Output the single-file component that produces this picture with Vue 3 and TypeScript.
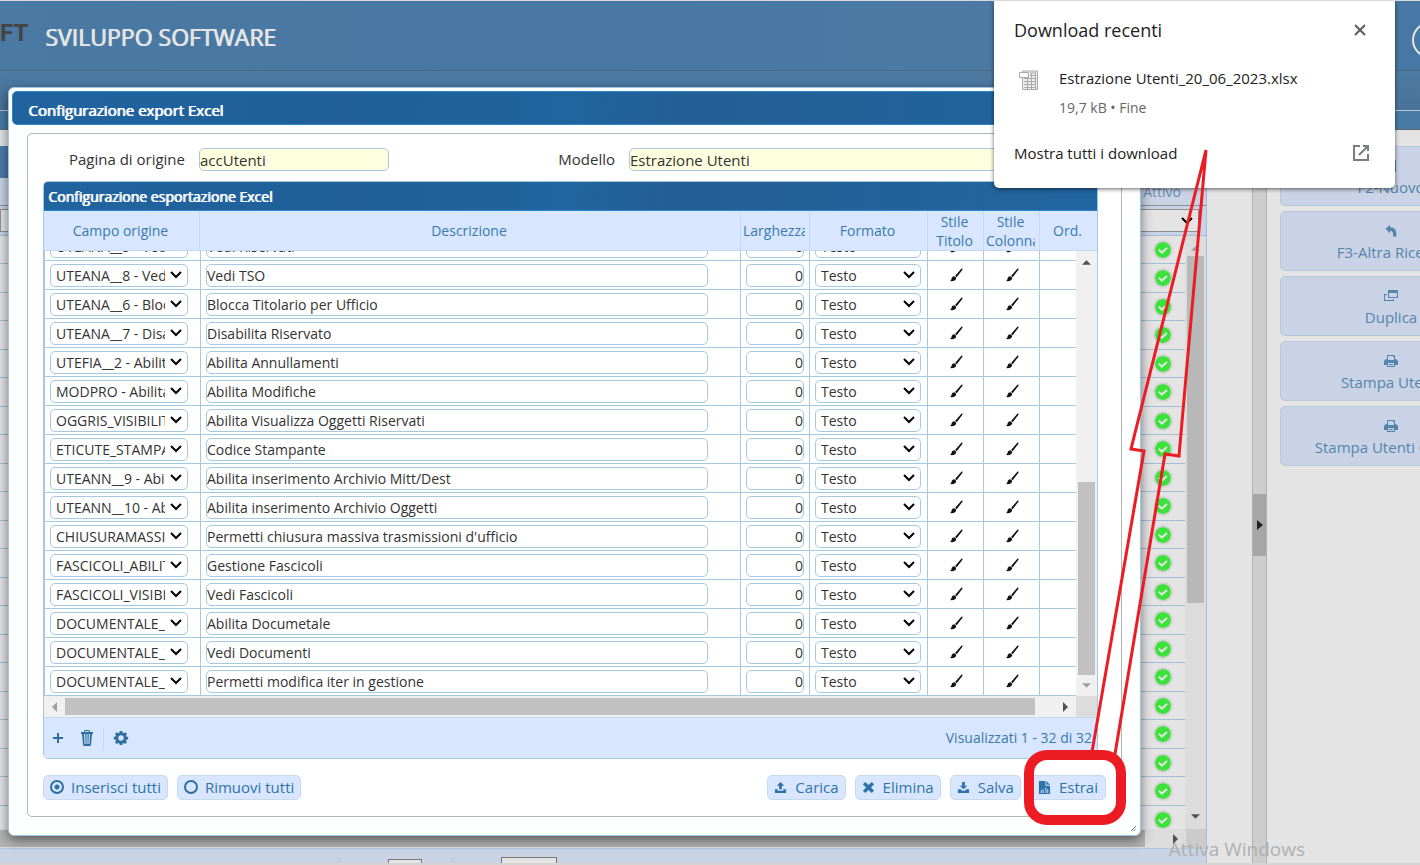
<script setup lang="ts">
import { ref } from 'vue'

interface FieldRow {
  field: string
  description: string
}

const rows = ref<FieldRow[]>([
  { field: 'UTEANA__5 - Vedi Riservati', description: 'Vedi Riservati' },
  { field: 'UTEANA__8 - Vedi TSO', description: 'Vedi TSO' },
  { field: 'UTEANA__6 - Blocca Titolario', description: 'Blocca Titolario per Ufficio' },
  { field: 'UTEANA__7 - Disabilita Riservato', description: 'Disabilita Riservato' },
  { field: 'UTEFIA__2 - Abilita Annullamenti', description: 'Abilita Annullamenti' },
  { field: 'MODPRO - Abilita Modifiche', description: 'Abilita Modifiche' },
  { field: 'OGGRIS_VISIBILITA', description: 'Abilita Visualizza Oggetti Riservati' },
  { field: 'ETICUTE_STAMPANTE', description: 'Codice Stampante' },
  { field: 'UTEANN__9 - Abilita inserimento', description: 'Abilita inserimento Archivio Mitt/Dest' },
  { field: 'UTEANN__10 - Abilita inserimento', description: 'Abilita inserimento Archivio Oggetti' },
  { field: 'CHIUSURAMASSIVA', description: "Permetti chiusura massiva trasmissioni d'ufficio" },
  { field: 'FASCICOLI_ABILITA', description: 'Gestione Fascicoli' },
  { field: 'FASCICOLI_VISIBILITA', description: 'Vedi Fascicoli' },
  { field: 'DOCUMENTALE_ABILITA', description: 'Abilita Documetale' },
  { field: 'DOCUMENTALE_VEDI', description: 'Vedi Documenti' },
  { field: 'DOCUMENTALE_MODIFICA', description: 'Permetti modifica iter in gestione' },
])

const headings = ['Campo origine', 'Descrizione', 'Larghezza', 'Formato', 'Stile Titolo', 'Stile Colonna', 'Ord.']

const userRows = Array.from({ length: 21 }, (_, i) => i)

const sideActions = [
  { label: 'F2-Nuovo', icon: 'new' },
  { label: 'F3-Altra Ricerca', icon: 'back' },
  { label: 'Duplica', icon: 'copy' },
  { label: 'Stampa Utenti', icon: 'print' },
  { label: 'Stampa Utenti Gruppi', icon: 'print' },
]

const mode = ref('all')
const origin = ref('accUtenti')
const model = ref('Estrazione Utenti')
</script>

<template>
  <div class="app">
    <header class="banner">
      <span class="logo">FT</span>
      <h1>SVILUPPO SOFTWARE</h1>
      <svg class="power" viewBox="0 0 38 38" aria-hidden="true">
        <circle cx="19" cy="19" r="17" />
        <path d="M13 13a9 9 0 1 0 12 0M19 8v10" />
      </svg>
    </header>
    <div class="menubar"></div>
    <div class="tabbar"></div>

    <div class="workspace">
      <section class="users" aria-label="Utenti">
        <div class="users-title"></div>
        <div class="users-head"><span>Attivo</span></div>
        <div class="users-filter">
          <span class="pick">
            <select aria-label="Filtro attivo"><option></option></select>
            <svg viewBox="0 0 12 8"><path d="M1 1l5 5 5-5" /></svg>
          </span>
        </div>
        <div class="users-body">
          <ul>
            <li v-for="n in userRows" :key="n">
              <svg class="check" viewBox="0 0 16 16" aria-hidden="true">
                <circle cx="8" cy="8" r="8" />
                <path d="M3.8 7.6l3 3 5.2-4.6" />
              </svg>
            </li>
          </ul>
          <div class="users-vbar">
            <svg viewBox="0 0 10 5" class="tri"><path d="M0 5l5-5 5 5z" /></svg>
            <div class="users-thumb"></div>
            <svg viewBox="0 0 10 5" class="tri dark"><path d="M0 0l5 5 5-5z" /></svg>
          </div>
        </div>
        <div class="users-hbar">
          <div class="users-hthumb"></div>
          <svg viewBox="0 0 5 10" class="tri-h"><path d="M0 0l5 5-5 5z" /></svg>
          <div class="users-corner"></div>
        </div>
        <div class="users-pager"><i></i><input aria-label="Pagina" /><i></i><input aria-label="Righe" /></div>
      </section>
      <div class="splitter">
        <button type="button" aria-label="Comprimi pannello">
          <svg viewBox="0 0 6 10"><path d="M0 0l6 5-6 5z" /></svg>
        </button>
      </div>
      <aside class="actions">
        <button v-for="a in sideActions" :key="a.label" type="button">
          <svg v-if="a.icon === 'new'" viewBox="0 0 14 14"><path d="M2 1h10v12H2z" /></svg>
          <svg v-else-if="a.icon === 'back'" viewBox="0 0 14 14">
            <path d="M1.500 4.800L6 1v2.300c4.800 0 7 2.700 6.300 9.200H9c.300-4.200-.3-5.500-3-5.500v2.500z" />
          </svg>
          <svg v-else-if="a.icon === 'copy'" viewBox="0 0 14 14">
            <path fill-rule="evenodd" d="M4 1h10v8H4zM5 4v4h8V4zM0 5h3v1H1v5h8v-1h1v2H0z" />
          </svg>
          <svg v-else viewBox="0 0 14 14">
            <path fill-rule="evenodd" d="M3 1h7l1 1v3h1l2 2v4h-3v2H3v-2H0V7l2-2h1zM4 2v4h6V3H9V2zM4 9v3h6V9zM5 10h4v1H5z" />
          </svg>
          <span>{{ a.label }}</span>
        </button>
      </aside>
      <p class="watermark">Attiva Windows</p>
    </div>

    <section class="dialog" role="dialog" aria-labelledby="dialog-title">
      <h2 id="dialog-title" class="dialog-title">Configurazione export Excel</h2>
      <div class="panel">
        <div class="form-row">
          <label for="origin">Pagina di origine</label>
          <input id="origin" v-model="origin" class="origin" />
          <label for="model" class="model-label">Modello</label>
          <input id="model" v-model="model" class="model" />
        </div>

        <div class="grid">
          <h3>Configurazione esportazione Excel</h3>
          <table class="head">
            <colgroup>
              <col class="c-field" /><col /><col class="c-width" /><col class="c-format" />
              <col class="c-style" /><col class="c-style" /><col class="c-ord" />
            </colgroup>
            <thead>
              <tr>
                <th v-for="h in headings" :key="h"><div>{{ h }}</div></th>
              </tr>
            </thead>
          </table>
          <div class="body">
            <div class="viewport">
              <table class="rows">
                <colgroup>
                  <col class="c-first" /><col /><col class="c-width" /><col class="c-format" />
                  <col class="c-style" /><col class="c-style" /><col class="c-rest" />
                </colgroup>
                <tbody>
                  <tr v-for="row in rows" :key="row.field">
                    <td>
                      <span class="pick field">
                        <select aria-label="Campo origine"><option>{{ row.field }}</option></select>
                        <svg viewBox="0 0 12 8"><path d="M1 1l5 5 5-5" /></svg>
                      </span>
                    </td>
                    <td><input v-model="row.description" class="desc" aria-label="Descrizione" /></td>
                    <td><input value="0" class="num" aria-label="Larghezza" /></td>
                    <td>
                      <span class="pick format">
                        <select aria-label="Formato"><option>Testo</option></select>
                        <svg viewBox="0 0 12 8"><path d="M1 1l5 5 5-5" /></svg>
                      </span>
                    </td>
                    <td v-for="k in 2" :key="k" class="brush">
                      <button type="button" :aria-label="k === 1 ? 'Stile Titolo' : 'Stile Colonna'">
                        <svg viewBox="0 0 14 14">
                          <path d="M13.200.6c.6.4.3 1.100-.1 1.600L7.700 9.300 6.100 8l5.800-6.800c.5-.6.9-.9 1.300-.6zM5.600 8.400l1.600 1.300c.2 2.500-2.400 4-6.400 3.400 1.400-.4 1.500-1.400 1.800-2.500.4-1.600 1.600-2.600 3-2.200z" />
                        </svg>
                      </button>
                    </td>
                    <td></td>
                  </tr>
                </tbody>
              </table>
            </div>
            <div class="vbar">
              <svg viewBox="0 0 10 5" class="tri dark"><path d="M0 5l5-5 5 5z" /></svg>
              <div class="vthumb"></div>
              <svg viewBox="0 0 10 5" class="tri"><path d="M0 0l5 5 5-5z" /></svg>
            </div>
          </div>
          <div class="hbar">
            <svg viewBox="0 0 5 10" class="tri-h light"><path d="M5 0L0 5l5 5z" /></svg>
            <div class="hthumb"></div>
            <svg viewBox="0 0 5 10" class="tri-h"><path d="M0 0l5 5-5 5z" /></svg>
            <div class="corner"></div>
          </div>
          <div class="pager">
            <button type="button" aria-label="Aggiungi">
              <svg viewBox="0 0 16 16"><path d="M7 3h2v4h4v2H9v4H7V9H3V7h4z" /></svg>
            </button>
            <button type="button" aria-label="Elimina riga">
              <svg viewBox="0 0 16 16">
                <path fill-rule="evenodd" d="M5 2V1l1-1h4l1 1v1h3v2h-1l-1 11-1 1H5l-1-1L3 4H2V2zM6 1v1h4V1zM5 4l.6 10h1L6.200 4zM7.500 4v10h1V4zM9.800 4l-.4 10h1L11 4z" />
              </svg>
            </button>
            <i></i>
            <button type="button" aria-label="Impostazioni">
              <svg viewBox="0 0 16 16">
                <path fill-rule="evenodd" d="M6.700 1h2.600l.4 1.800 1 .4 1.500-1 1.800 1.800-1 1.500.4 1 1.800.4v2.400l-1.800.4-.4 1 1 1.500-1.800 1.800-1.500-1-1 .4L9.300 15H6.700l-.4-1.600-1-.4-1.500 1L2 12.200l1-1.500-.4-1L.8 9.300V6.900l1.800-.4.4-1-1-1.500 1.800-1.800 1.500 1 1-.4zM8 5.300a2.700 2.700 0 1 0 0 5.400 2.700 2.700 0 0 0 0-5.400z" />
              </svg>
            </button>
            <span>Visualizzati 1 - 32 di 32</span>
          </div>
        </div>

        <div class="footer">
          <label class="btn"><input v-model="mode" type="radio" name="mode" value="all" />Inserisci tutti</label>
          <label class="btn"><input v-model="mode" type="radio" name="mode" value="none" />Rimuovi tutti</label>
          <button type="button" class="btn first">
            <svg viewBox="0 0 14 14"><path d="M7 1l4 4H8.500v4h-3V5H3zM1 9h3v1.500h6V9h3v4H1z" /></svg>Carica
          </button>
          <button type="button" class="btn">
            <svg viewBox="0 0 14 14"><path d="M3.500 1L7 4.300 10.500 1 13 3.500 9.700 7l3.300 3.500-2.500 2.500L7 9.700 3.500 13 1 10.500 4.300 7 1 3.500z" /></svg>Elimina
          </button>
          <button type="button" class="btn">
            <svg viewBox="0 0 14 14"><path d="M5.500 1h3v4H11L7 9 3 5h2.500zM1 9h3l1.500 1.500h3L10 9h3v4H1z" /></svg>Salva
          </button>
          <button type="button" class="btn last">
            <svg viewBox="0 0 14 14">
              <path fill-rule="evenodd" d="M1 0h7v5h5v9H1zM9 0l4 4H9zM3 10v3h1v-3zM5 9v4h1V9zM8 7v6h1V7zM10 9v4h1V9z" />
            </svg>Estrai
          </button>
        </div>
      </div>
      <svg class="grip" viewBox="0 0 6 6" aria-hidden="true"><path d="M0 6l6-6M3 6l3-3" /></svg>
    </section>

    <section class="downloads" aria-label="Download recenti">
      <div class="dl-head">
        <h2>Download recenti</h2>
        <button type="button" aria-label="Chiudi">
          <svg viewBox="0 0 12 12"><path d="M1 1l10 10M11 1L1 11" /></svg>
        </button>
      </div>
      <div class="dl-item">
        <svg viewBox="0 0 20 20" class="sheet" aria-hidden="true">
          <path d="M3.500 1h15v18.500h-15z" fill="#eee" stroke="#a9a9a9" />
          <path d="M5 8.500h12M5 11.500h12M5 14.500h12M5 17.500h12M8.500 6v13M12.500 3v16M16.500 3v16M11 5.500h6M11 3h6" stroke="#a9a9a9" fill="none" />
          <path d="M.5 2.500h9v5h-9z" fill="#fff" stroke="#a9a9a9" />
        </svg>
        <div>
          <a href="#">Estrazione Utenti_20_06_2023.xlsx</a>
          <p>19,7 kB • Fine</p>
        </div>
      </div>
      <a href="#" class="dl-all">
        <span>Mostra tutti i download</span>
        <svg viewBox="0 0 16 16"><path d="M7 1H1v14h14V9M10 1h5v5M15 1L6 10" /></svg>
      </a>
    </section>

    <svg class="marker" viewBox="0 0 104 680" aria-hidden="true">
      <path class="arrow" d="M69 604L121 303l-13-2L183 2l-27 306-14-2L92 606" />
      <rect x="6" y="607" width="92" height="65" rx="18" />
    </svg>
  </div>
</template>

<style>
body {
  margin: 0;
  overflow: hidden;
}
</style>

<style scoped>
* {
  box-sizing: border-box;
}
.app {
  position: relative;
  height: 100vh;
  display: flex;
  flex-direction: column;
  overflow: hidden;
  background: #e4e4e4;
  border-top: 1px solid #d8d8d8;
  border-bottom: 2px solid #d4d4d4;
  font: 400 14px/20px 'Open Sans', 'Noto Sans', sans-serif;
  color: #333;
}
h1, h2, h3, p, ul {
  margin: 0;
  padding: 0;
  font-weight: inherit;
}
button, input, select {
  font: inherit;
  color: inherit;
  margin: 0;
}
button {
  border: 0;
  padding: 0;
  background: none;
}
svg {
  display: block;
  flex: none;
  fill: currentColor;
}
.banner {
  height: 70px;
  flex: none;
  display: flex;
  align-items: center;
  background: linear-gradient(90deg, #4a79a3, #4877a3 40%, #4c7aa5 70%, #4777a4);
  border-bottom: 1px solid #4d6a85;
}
.logo {
  width: 45px;
  padding-bottom: 6px;
  color: #444;
  font: 700 24px/24px Roboto, sans-serif;
}
h1 {
  flex: 1;
  font-size: 23px;
  line-height: 32px;
  padding-top: 2px;
  color: #e4e4e4;
  text-shadow: 1px 0 #e4e4e4;
}
.power {
  width: 38px;
  height: 38px;
  margin-right: -29px;
  margin-top: 8px;
  fill: none;
  stroke: #e4e4e4;
  stroke-width: 2;
}
.menubar {
  height: 40px;
  flex: none;
  background: linear-gradient(#4d7ba3, #4a7299);
  border-bottom: 1px solid #b9c6d2;
}
.tabbar {
  height: 19px;
  flex: none;
  background: #487aa6;
  border-bottom: 1px solid #5b6770;
}
.workspace {
  flex: 1;
  min-height: 0;
  display: flex;
  position: relative;
}
.users {
  flex: 1;
  margin-right: 45px;
  padding-top: 16px;
  display: flex;
  flex-direction: column;
  border-right: 1px solid #a3bdd6;
}
.users-title {
  height: 32px;
  background: #4b7ba8;
}
.users-head {
  height: 28px;
  padding: 4px 25px 0 0;
  background: #c9d3e4;
  color: #6a8cab;
  text-align: right;
  border-bottom: 1px solid #8f8f8f;
}
.users-filter {
  height: 30px;
  padding: 3px 7px 0 0;
  background: #c9d3e4;
  border-bottom: 1px solid #a3bdd6;
}
.pick {
  display: grid;
  grid-template-columns: 1fr 18px;
  align-items: center;
}
.pick select {
  grid-area: 1 / 1 / 2 / 3;
  width: 100%;
  height: 23px;
  appearance: none;
  padding: 1px 22px 0 5px;
  line-height: 20px;
  background: #fff;
  border: 1px solid #a6c9e2;
  border-radius: 5px;
}
.pick svg {
  grid-area: 1 / 2;
  width: 12px;
  height: 8px;
  fill: none;
  stroke: #000;
  stroke-width: 2;
  pointer-events: none;
}
.users-filter .pick select {
  border-color: #8f8f8f;
  border-radius: 0;
  background: #e4e4e4;
}
.users-body {
  flex: 1;
  min-height: 0;
  display: flex;
}
.users-body ul {
  flex: 1;
  list-style: none;
  overflow: hidden;
}
.users-body li {
  height: 28px;
  display: flex;
  align-items: center;
  justify-content: flex-end;
  padding-right: 14px;
  border-bottom: 1px solid #a3bdd6;
}
.users-body li:nth-child(even) {
  height: 29px;
}
.check {
  width: 16px;
  height: 16px;
  border-radius: 8px;
  box-shadow: 0 0 3px #999;
  fill: #3ae23a;
}
.check path {
  fill: none;
  stroke: #e4e4e4;
  stroke-width: 2;
}
.users-vbar {
  width: 21px;
  padding: 10px 1px;
  display: flex;
  flex-direction: column;
  align-items: center;
  background: #dcdcdc;
}
.users-thumb {
  width: 17px;
  height: 347px;
  margin: 5px 0 auto;
  background: #b8b8b8;
}
.tri {
  width: 9px;
  height: 5px;
  color: #a0a0a0;
}
.tri.dark {
  color: #505050;
}
.tri-h {
  width: 5px;
  height: 10px;
  color: #505050;
}
.tri-h.light {
  color: #a0a0a0;
}
.users-hbar {
  height: 19px;
  display: flex;
  align-items: center;
  background: #dcdcdc;
}
.users-hthumb {
  flex: 1;
  height: 17px;
  margin-right: 28px;
  background: #b3b3b3;
}
.users-corner {
  width: 20px;
  height: 19px;
  margin-left: 8px;
  background: #cbcbcb;
}
.users-pager {
  height: 15px;
  display: flex;
  gap: 48px;
  padding-left: 339px;
  overflow: hidden;
  background: #c9d3e4;
  border-top: 1px solid #b5c8dc;
}
.users-pager i {
  width: 1px;
  margin-top: 9px;
  background: #b9c2d0;
}
.users-pager input {
  width: 34px;
  height: 20px;
  margin-top: 10px;
  margin-right: -18px;
  border: 1px solid #777;
  background: #e4e4e4;
  flex: none;
}
.users-pager input:last-child {
  width: 56px;
  margin-top: 8px;
}
.splitter {
  width: 15px;
  display: flex;
  align-items: center;
  background: #cdcdcd;
  border: solid #b0b0b0;
  border-width: 0 1px;
}
.splitter button {
  width: 13px;
  height: 62px;
  margin-top: 56px;
  background: #a6a6a6;
  color: #222;
}
.splitter svg {
  width: 6px;
  height: 10px;
  margin-left: 4px;
}
.actions {
  width: 153px;
  padding: 16px 0 0 13px;
  display: flex;
  flex-direction: column;
  gap: 5px;
  overflow: hidden;
}
.actions button {
  width: 222px;
  height: 60px;
  flex: none;
  padding-top: 3px;
  display: flex;
  flex-direction: column;
  align-items: center;
  justify-content: center;
  gap: 4px;
  font-size: 15px;
  background: #c9d3e5;
  border: 1px solid #b5c8dc;
  border-radius: 5px;
  color: #5685ab;
}
.actions svg {
  width: 14px;
  height: 14px;
}
.watermark {
  position: absolute;
  right: 115px;
  bottom: 0;
  color: #b0b0b0;
  font: 400 19px/28px 'Open Sans', sans-serif;
}
.dialog {
  position: absolute;
  left: 8px;
  right: 279px;
  top: 86px;
  padding: 3px 3px 18px;
  background: #fdfefe;
  border: 1px solid #9fc6e4;
  border-radius: 6px;
  box-shadow: 0 4px 12px rgba(0, 0, 0, 0.5);
}
.dialog-title {
  height: 34px;
  padding: 8px 15px;
  line-height: 20px;
  font-size: 15px;
  color: #fff;
  text-shadow: 1px 0 #fff;
  background: linear-gradient(100deg, #20649f, #205f99 30%, #1f659f 50%, #255e94 60%, #2066a1);
  border: 1px solid #2e86cc;
  border-radius: 5px;
}
.panel {
  margin: 8px 15px 0;
  padding: 14px 15px 16px;
  background: #fff;
  border: 1px solid #b4b4b4;
  border-radius: 5px;
}
.form-row {
  display: flex;
  align-items: center;
  font-size: 15px;
}
.form-row label {
  width: 142px;
  padding-bottom: 1px;
  text-align: right;
  margin-right: 14px;
  flex: none;
}
.form-row .model-label {
  width: 226px;
}
.form-row input {
  height: 23px;
  padding: 0;
  border: 1px solid #a6c9e2;
  border-radius: 5px;
  background: #fdffdf;
}
.origin {
  width: 190px;
}
.model {
  flex: 1;
}
.grid {
  margin-top: 10px;
  margin-right: 8px;
  border: 1px solid #a6c9e2;
  border-radius: 5px;
  overflow: hidden;
}
.grid h3 {
  height: 29px;
  padding: 5px 4px;
  line-height: 20px;
  font-size: 14px;
  color: #fff;
  text-shadow: 1px 0 #fff;
  background: linear-gradient(100deg, #20649f, #205f99 30%, #1f659f 50%, #255e94 60%, #2066a1);
  border-bottom: 1px solid #2e86cc;
}
table {
  width: 100%;
  table-layout: fixed;
  border-collapse: separate;
  border-spacing: 0;
}
.c-field {
  width: 156px;
}
.c-first {
  width: 157px;
}
.c-width {
  width: 69px;
}
.c-format {
  width: 118px;
}
.c-style {
  width: 56px;
}
.c-ord {
  width: 57px;
}
.c-rest {
  width: 36px;
}
th {
  height: 40px;
  padding: 0 4px 0 2px;
  font-weight: inherit;
  line-height: 19px;
  color: #3a7aac;
  background: #d8e6ff;
  text-align: center;
  border-right: 1px solid #c5dbec;
  border-bottom: 1px solid #c5dbec;
}
th div {
  overflow: hidden;
}
th:last-child {
  border-right: 0;
}
.body {
  display: flex;
}
.viewport {
  flex: 1;
  height: 445px;
  display: flex;
  align-items: flex-end;
  overflow: hidden;
}
td {
  height: 29px;
  padding: 0 0 0 5px;
  line-height: 0;
  border-right: 1px solid #a6c9e2;
  border-bottom: 1px solid #a6c9e2;
}
td:first-child {
  border-left: 1px solid #a6c9e2;
}
td:last-child {
  border-right: 0;
}
td input {
  height: 23px;
  line-height: 19px;
  padding: 0;
  background: #fff;
  border: 1px solid #a6c9e2;
  border-radius: 5px;
}
.field {
  width: 138px;
}
.desc {
  width: calc(100% - 32px);
}
.num {
  width: 58px;
  text-align: right;
}
.format {
  width: 106px;
}
td.brush {
  padding: 0;
}
.brush button {
  width: 100%;
  display: flex;
  justify-content: center;
  color: #111;
}
.brush svg {
  width: 14px;
  height: 14px;
}
.vbar {
  width: 21px;
  padding: 9px 0 8px;
  display: flex;
  flex-direction: column;
  align-items: center;
  background: #f0f0f0;
}
.vthumb {
  width: 17px;
  height: 193px;
  margin: auto 0 8px;
  background: #c1c1c1;
}
.hbar {
  height: 21px;
  padding-left: 8px;
  display: flex;
  align-items: center;
  background: #f0f0f0;
}
.hthumb {
  flex: 1;
  height: 17px;
  margin: 0 28px 0 8px;
  background: #c1c1c1;
}
.corner {
  width: 21px;
  height: 21px;
  margin-left: 8px;
  background: #dcdcdc;
}
.pager {
  height: 41px;
  padding: 0 5px 0 6px;
  display: flex;
  align-items: center;
  background: #d8e6ff;
  border-top: 1px solid #c5dbec;
  color: #2e6f9f;
}
.pager svg {
  width: 16px;
  height: 16px;
}
.pager button:nth-child(2) {
  margin: 0 8px 0 13px;
}
.pager i {
  width: 1px;
  height: 23px;
  margin-right: 9px;
  background: #cdd6ea;
}
.pager span {
  margin-left: auto;
  color: #3a7aac;
}
.footer {
  display: flex;
  gap: 9px;
  margin-top: 16px;
}
.btn {
  height: 25px;
  padding: 0 6px 1px;
  display: flex;
  align-items: center;
  gap: 8px;
  font-size: 15px;
  line-height: 20px;
  color: #2e74a8;
  background: #d8e6ff;
  border: 1px solid #c5dbec;
  border-radius: 5px;
}
label.btn {
  gap: 7px;
}
.btn.first {
  margin-left: auto;
}
.btn.last {
  padding: 0 7px 1px;
}
.btn svg {
  width: 13px;
  height: 13px;
}
.btn input {
  appearance: none;
  width: 14px;
  height: 14px;
  border: 2px solid #2e6f9f;
  border-radius: 50%;
}
.btn input:checked {
  background: radial-gradient(circle, #2e6f9f 2px, transparent 3px);
}
.grip {
  position: absolute;
  right: 4px;
  bottom: 4px;
  width: 5px;
  height: 5px;
  stroke: #666;
}
.downloads {
  position: absolute;
  top: 0;
  right: 25px;
  width: 401px;
  height: 187px;
  padding: 19px 26px 0 20px;
  background: #fff;
  border-radius: 0 0 5px 5px;
  box-shadow: 0 1px 4px rgba(0, 0, 0, 0.6);
  color: #222;
}
.dl-head, .dl-item, .dl-all {
  display: flex;
}
.dl-head {
  justify-content: space-between;
  align-items: center;
}
.dl-head h2 {
  font-size: 18px;
  line-height: 20px;
}
.dl-head svg {
  width: 12px;
  height: 12px;
  margin-right: 3px;
  stroke: #5a5e63;
  stroke-width: 2;
}
.dl-item {
  gap: 20px;
  margin: 28px 0 25px 5px;
}
.sheet {
  width: 20px;
  height: 20px;
  margin-top: 2px;
}
.dl-item a {
  font-size: 15px;
  color: #222;
  text-decoration: none;
}
.dl-item p {
  margin-top: 9px;
  color: #666;
}
.dl-all {
  justify-content: space-between;
  align-items: center;
  font-size: 15px;
  color: #222;
  text-decoration: none;
}
.dl-all svg {
  width: 16px;
  height: 16px;
  fill: none;
  stroke: #7a7e83;
  stroke-width: 2;
}
.marker {
  position: absolute;
  right: 293px;
  top: 147px;
  width: 104px;
  height: 680px;
  overflow: visible;
  pointer-events: none;
  fill: none;
  stroke: #ed1c24;
}
.marker rect {
  stroke-width: 10;
}
.arrow {
  stroke-width: 3;
}
</style>
